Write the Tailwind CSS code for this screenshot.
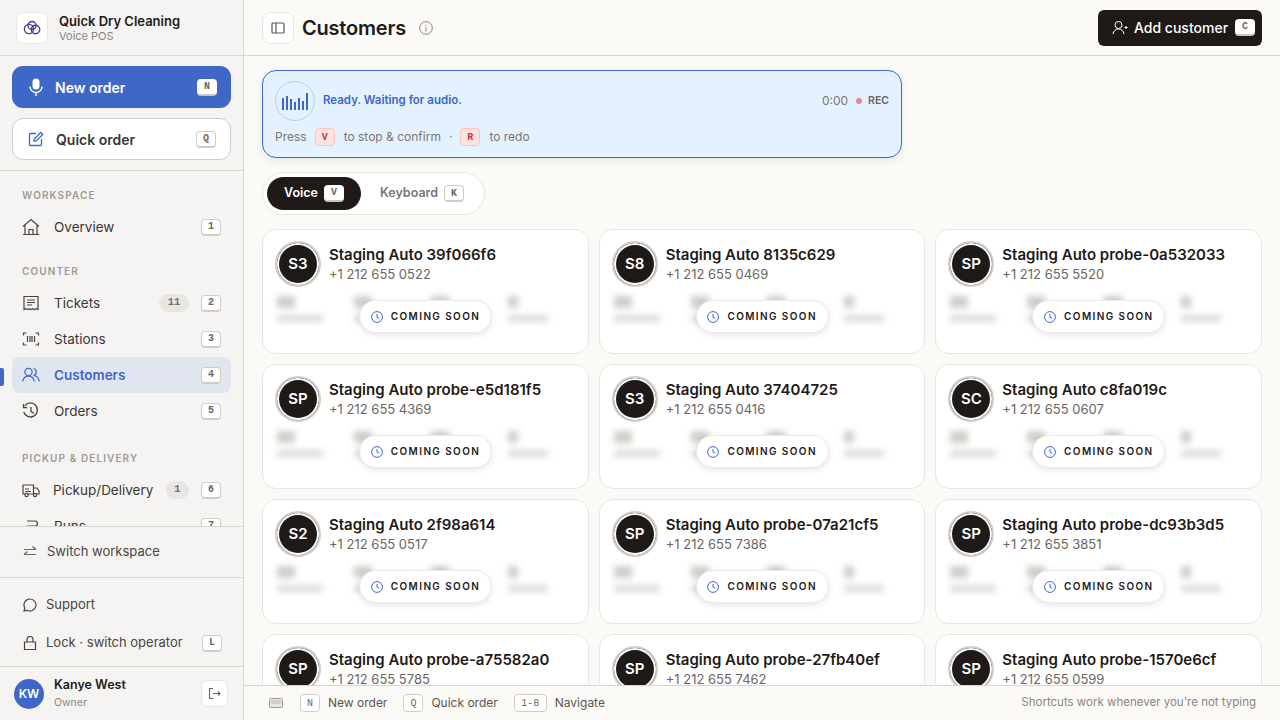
<!DOCTYPE html>
<html lang="en">
<head>
    <meta charset="UTF-8">
    <title>Customers</title>
    <script src="https://cdn.jsdelivr.net/npm/@tailwindcss/browser@4"></script>
</head>
<body class="h-[720px] w-[1280px] overflow-hidden bg-[#fbfaf7] font-['Inter',sans-serif] text-[#1f1a17]">
<div class="flex h-[720px]">
    <!-- sidebar -->
    <aside class="flex h-full w-[244px] shrink-0 flex-col border-r border-[#d9d7d2] bg-[#f5f4f2]">
        <div class="flex h-[56px] shrink-0 items-center gap-[11px] border-b border-[#d9d7d2] pl-[16px]">
            <div class="flex h-[32px] w-[32px] items-center justify-center rounded-[8px] border border-[#e8e6e2] bg-white">
                <svg width="20" height="16" viewBox="0 0 20 16" fill="none" stroke="#4b3a9a" stroke-width="1.4"><circle cx="7" cy="9" r="4.6"/><circle cx="13.5" cy="9.5" r="4.2"/><circle cx="10" cy="5.5" r="4"/></svg>
            </div>
            <div>
                <div class="text-[13px] leading-[16px] font-semibold">Quick Dry Cleaning</div>
                <div class="text-[11px] leading-[14px] text-[#8b8580]">Voice POS</div>
            </div>
        </div>
        <div class="flex h-[115px] shrink-0 flex-col gap-[10px] border-b border-[#d9d7d2] px-[12px] pt-[10px]">
            <div class="flex h-[42px] items-center rounded-[11px] bg-[#3e67c8] pr-[14px] pl-[16px] text-white">
                <svg width="16" height="18" viewBox="0 0 16 18" fill="none" class="mr-[11px]"><rect x="4.5" y="0.5" width="7" height="11" rx="3.5" fill="#fff"/><path d="M2 8.5a6 6 0 0 0 12 0M8 14.5V18" stroke="#fff" stroke-width="1.4"/></svg>
                <span class="flex-1 text-[14px] font-semibold">New order</span>
                <span class="flex h-[17px] w-[20px] items-center justify-center rounded-[4px] border-b-2 border-[#c9c7c3] bg-white font-['Liberation_Mono',monospace] text-[10px] font-bold text-[#6b6560]">N</span>
            </div>
            <div class="flex h-[42px] items-center rounded-[11px] border border-[#cfcdc8] bg-white pr-[14px] pl-[15px] text-[#3d3733]">
                <svg width="16" height="16" viewBox="0 0 16 16" fill="none" stroke="#3e67c8" stroke-width="1.3" class="mr-[12px]"><path d="M8 2.5H2.5a1 1 0 0 0-1 1v10a1 1 0 0 0 1 1h10a1 1 0 0 0 1-1V8"/><path d="M6 10.2l.5-2.5L12.7 1.5l2 2L8.5 9.7z"/></svg>
                <span class="flex-1 text-[14px] font-semibold">Quick order</span>
                <span class="kbd flex h-[17px] w-[20px] items-center justify-center rounded-[4px] border border-b-2 border-[#cfcdc8] bg-white font-['Liberation_Mono',monospace] text-[10px] font-bold text-[#6b6560]">Q</span>
            </div>
        </div>
        <nav class="h-[356px] shrink-0 overflow-hidden border-b border-[#d9d7d2] px-[12px]">
            <div class="pt-[18px] pl-[10px] text-[10px] leading-[12px] font-semibold tracking-[1.1px] text-[#a09a94]">WORKSPACE</div>
            <div class="mt-[8px] flex h-[36px] items-center pr-[10px] pl-[10px] text-[#3d3733]">
                <svg class="mr-[14px] h-[18px] w-[18px]" viewBox="0 0 18 18" fill="none" stroke="#4a4440" stroke-width="1.2"><path d="M1 8.5L9 1.5l8 7M3 7v9.5h12V7M1 16.5h16M7 16.5v-5h4v5"/></svg>
                <span class="flex-1 text-[13.5px]">Overview</span>
                <span class="flex h-[17px] w-[20px] items-center justify-center rounded-[4px] border border-b-2 border-[#cfcdc8] bg-white font-['Liberation_Mono',monospace] text-[10px] font-bold text-[#6b6560]">1</span>
            </div>
            <div class="mt-[20px] pl-[10px] text-[10px] leading-[12px] font-semibold tracking-[1.1px] text-[#a09a94]">COUNTER</div>
            <div class="mt-[8px] flex h-[36px] items-center pr-[10px] pl-[10px] text-[#3d3733]">
                <svg class="mr-[14px] h-[18px] w-[18px]" viewBox="0 0 18 18" fill="none" stroke="#4a4440" stroke-width="1.2"><path d="M2 15.5V2.5h14v13l-1.7-.8-1.8.8-1.7-.8-1.8.8-1.8-.8-1.7.8-1.7-.8zM5 6h8M5 8.5h8M5 11h5"/></svg>
                <span class="flex-1 text-[13.5px]">Tickets</span>
                <span class="mr-[12px] flex h-[18px] w-[30px] items-center justify-center rounded-full bg-[#e8e6e3] font-['Liberation_Mono',monospace] text-[10.5px] font-bold text-[#78726d]">11</span>
                <span class="flex h-[17px] w-[20px] items-center justify-center rounded-[4px] border border-b-2 border-[#cfcdc8] bg-white font-['Liberation_Mono',monospace] text-[10px] font-bold text-[#6b6560]">2</span>
            </div>
            <div class="flex h-[36px] items-center pr-[10px] pl-[10px] text-[#3d3733]">
                <svg class="mr-[14px] h-[18px] w-[18px]" viewBox="0 0 18 18" fill="none" stroke="#4a4440" stroke-width="1.2"><path d="M1.5 5.5V3h3M13.5 3h3v2.5M16.5 12.5V15h-3M4.5 15h-3v-2.5M5.5 6v6M8 6v6M10 6v6M12.5 6v6"/></svg>
                <span class="flex-1 text-[13.5px]">Stations</span>
                <span class="flex h-[17px] w-[20px] items-center justify-center rounded-[4px] border border-b-2 border-[#cfcdc8] bg-white font-['Liberation_Mono',monospace] text-[10px] font-bold text-[#6b6560]">3</span>
            </div>
            <div class="flex h-[36px] items-center rounded-[8px] bg-[#e0e5f0] pr-[10px] pl-[10px] text-[#3e67c8]">
                <svg class="mr-[14px] h-[18px] w-[18px]" viewBox="0 0 18 18" fill="none" stroke="#3e67c8" stroke-width="1.2"><circle cx="6.5" cy="6" r="3.6"/><path d="M.7 15.5c.6-3.4 2.8-5.4 5.8-5.4s5.200 2 5.800 5.400M11.500 2.500a3.600 3.600 0 0 1 0 7c2.900.2 5.100 2.200 5.800 6"/></svg>
                <span class="flex-1 text-[13.5px] font-semibold">Customers</span>
                <span class="flex h-[17px] w-[20px] items-center justify-center rounded-[4px] border border-b-2 border-[#cfcdc8] bg-white font-['Liberation_Mono',monospace] text-[10px] font-bold text-[#6b6560]">4</span>
            </div>
            <div class="flex h-[36px] items-center pr-[10px] pl-[10px] text-[#3d3733]">
                <svg class="mr-[14px] h-[18px] w-[18px]" viewBox="0 0 18 18" fill="none" stroke="#4a4440" stroke-width="1.3"><path d="M3 3.500a7 7 0 1 1-1.300 6.500M1.500 2v3.500H5M9 5v4.500l3 1.700"/></svg>
                <span class="flex-1 text-[13.5px]">Orders</span>
                <span class="flex h-[17px] w-[20px] items-center justify-center rounded-[4px] border border-b-2 border-[#cfcdc8] bg-white font-['Liberation_Mono',monospace] text-[10px] font-bold text-[#6b6560]">5</span>
            </div>
            <div class="mt-[23px] pl-[10px] text-[10px] leading-[12px] font-semibold tracking-[1.1px] text-[#a09a94]">PICKUP &amp; DELIVERY</div>
            <div class="mt-[8px] flex h-[36px] items-center pr-[10px] pl-[10px] text-[#3d3733]">
                <svg class="mr-[13px] h-[18px] w-[18px] shrink-0" viewBox="0 0 18 18" fill="none" stroke="#4a4440" stroke-width="1.2"><path d="M1 4h10.500v9H1zM11.500 7h3.500l2 3v3h-5.500M3 8h4M3 10.500h6"/><circle cx="4.500" cy="14" r="1.600" fill="#f5f4f2"/><circle cx="13" cy="14" r="1.600" fill="#f5f4f2"/></svg>
                <span class="flex-1 text-[13.5px]">Pickup/Delivery</span>
                <span class="mr-[12px] flex h-[18px] w-[23px] items-center justify-center rounded-full bg-[#e8e6e3] font-['Liberation_Mono',monospace] text-[10.5px] font-bold text-[#78726d]">1</span>
                <span class="flex h-[17px] w-[20px] items-center justify-center rounded-[4px] border border-b-2 border-[#cfcdc8] bg-white font-['Liberation_Mono',monospace] text-[10px] font-bold text-[#6b6560]">6</span>
            </div>
            <div class="flex h-[36px] items-center pr-[10px] pl-[10px] text-[#3d3733]">
                <svg class="mr-[14px] h-[18px] w-[18px]" viewBox="0 0 18 18" fill="none" stroke="#4a4440" stroke-width="1.2"><path d="M5 4h8a2.500 2.500 0 0 1 0 5H6a2.500 2.500 0 0 0 0 5h8"/></svg>
                <span class="flex-1 text-[13.5px]">Runs</span>
                <span class="flex h-[17px] w-[20px] items-center justify-center rounded-[4px] border border-b-2 border-[#cfcdc8] bg-white font-['Liberation_Mono',monospace] text-[10px] font-bold text-[#6b6560]">7</span>
            </div>
        </nav>
        <div class="flex h-[51px] shrink-0 items-center border-b border-[#d9d7d2] pl-[23px] text-[13px] text-[#4a4440]">
            <svg class="mr-[10px] h-[14px] w-[14px]" viewBox="0 0 14 14" fill="none" stroke="#6b6560" stroke-width="1.2"><path d="M1 4.500h12M9.500 1.500l3.500 3M13 9.500H1M4.500 6.500l-3.500 3"/></svg>
            Switch workspace
        </div>
        <div class="h-[89px] shrink-0 border-b border-[#d9d7d2] px-[23px] pt-[8px] text-[13px] text-[#4a4440]">
            <div class="flex h-[38px] items-center">
                <svg class="mr-[9px] h-[14px] w-[14px]" viewBox="0 0 14 14" fill="none" stroke="#4a4440" stroke-width="1.2"><path d="M7 1a6 6 0 1 1-2.800 11.300L1 13l.8-3A6 6 0 0 1 7 1z"/></svg>
                Support
            </div>
            <div class="flex h-[38px] items-center">
                <svg class="mr-[9px] h-[14px] w-[14px]" viewBox="0 0 14 14" fill="none" stroke="#4a4440" stroke-width="1.2"><path d="M1.500 6h11v7.500h-11zM4 6V3.500a3 3 0 0 1 6 0V6M7 9.500v.5"/></svg>
                <span class="flex-1">Lock · switch operator</span>
                <span class="-mr-[2px] flex h-[17px] w-[20px] items-center justify-center rounded-[4px] border border-b-2 border-[#cfcdc8] bg-white font-['Liberation_Mono',monospace] text-[10px] font-bold text-[#6b6560]">L</span>
            </div>
        </div>
        <div class="flex flex-1 items-center pr-[15px] pl-[14px]">
            <div class="mr-[10px] flex h-[30px] w-[30px] items-center justify-center rounded-full bg-[#3e67c8] text-[12px] font-semibold text-white">KW</div>
            <div class="flex-1">
                <div class="text-[12.5px] leading-[16px] font-semibold">Kanye West</div>
                <div class="mt-[3px] text-[10.500px] leading-[14px] text-[#8b8580]">Owner</div>
            </div>
            <div class="flex h-[27px] w-[27px] items-center justify-center rounded-[7px] border border-[#e8e6e2] bg-white">
                <svg class="h-[13px] w-[13px]" viewBox="0 0 13 13" fill="none" stroke="#6b6560" stroke-width="1.100"><path d="M5 1.500H1.500v10H5M5 6.500h7M10 4.500l2 2-2 2"/></svg>
            </div>
        </div>
    </aside>

    <!-- indicator on the sidebar rail -->
    <div class="absolute top-[368px] left-0 h-[18px] w-[4px] rounded-r-[2px] bg-[#3e67c8]"></div>

    <main class="flex h-full min-w-0 flex-1 flex-col">
        <header class="flex h-[56px] shrink-0 items-center border-b border-[#d9d7d2] pr-[18px] pl-[18px]">
            <div class="mr-[8px] flex h-[32px] w-[32px] items-center justify-center rounded-[8px] border border-[#e8e6e2] bg-white">
                <svg class="h-[14px] w-[14px]" viewBox="0 0 14 14" fill="none" stroke="#5b5550" stroke-width="1.200"><rect x="1" y="2" width="12" height="10" rx="1"/><path d="M5 2v10"/></svg>
            </div>
            <h1 class="text-[20px] font-semibold tracking-[-0.2px]">Customers</h1>
            <svg class="ml-[13px] h-[14px] w-[14px]" viewBox="0 0 14 14" fill="none" stroke="#8b8580" stroke-width="1"><circle cx="7" cy="7" r="6.300"/><path d="M7 6.200v4M7 3.800v1"/></svg>
            <div class="ml-auto flex h-[36px] w-[164px] items-center rounded-[6px] bg-[#1f1a17] pl-[14px] text-white">
                <svg class="mr-[6px] h-[16px] w-[16px]" viewBox="0 0 16 16" fill="none" stroke="#fff" stroke-width="1"><circle cx="6.500" cy="5" r="3.500"/><path d="M1 14c.5-3 2.500-5 5.500-5s5 2 5.500 5M12.500 7.500h3M14 6v3"/></svg>
                <span class="text-[14px] font-medium">Add customer</span>
                <span class="ml-[7px] flex h-[17px] w-[20px] items-center justify-center rounded-[4px] border-b-2 border-[#c9c7c3] bg-white font-['Liberation_Mono',monospace] text-[10px] font-bold text-[#6b6560]">C</span>
            </div>
        </header>

        <div class="min-h-0 flex-1 overflow-hidden px-[18px] pt-[14px]">
            <!-- recording card -->
            <div class="h-[88px] w-[640px] rounded-[14px] border border-[#3e67c8] bg-[#e3f2fe] px-[12px] pt-[10px] shadow-[0_3px_8px_rgba(0,0,0,0.08)]">
                <div class="flex items-center">
                    <div class="mr-[8px] flex h-[40px] w-[40px] items-center justify-center rounded-full border border-[#b3cdf5]">
                        <svg width="27" height="17" viewBox="0 0 27 17" fill="#3e67c8"><rect x="0" y="5" width="2" height="12"/><rect x="4" y="3" width="2" height="14"/><rect x="8" y="6" width="2" height="11"/><rect x="12" y="9" width="2" height="8"/><rect x="16" y="5" width="2" height="12"/><rect x="20" y="8" width="2" height="9"/><rect x="24" y="0" width="2" height="17"/></svg>
                    </div>
                    <span class="text-[11.500px] font-semibold text-[#3e67c8]">Ready. Waiting for audio.</span>
                    <span class="ml-auto text-[12px] text-[#7c7672]">0:00</span>
                    <span class="mr-[6px] ml-[8px] h-[6px] w-[6px] rounded-full bg-[#e08a92]"></span>
                    <span class="text-[10.500px] font-semibold text-[#6b6560]">REC</span>
                </div>
                <div class="mt-[7px] flex items-center text-[12px] text-[#7c7672]">
                    <span>Press</span>
                    <span class="mr-[9px] ml-[8px] flex h-[18px] w-[20px] items-center justify-center rounded-[4px] border border-[#fbc3bd] bg-[#fee2df] font-['Liberation_Mono',monospace] text-[10px] font-bold text-[#c93a3a]">V</span>
                    <span>to stop &amp; confirm</span>
                    <span class="mx-[8px]">·</span>
                    <span class="mr-[9px] flex h-[18px] w-[20px] items-center justify-center rounded-[4px] border border-[#fbc3bd] bg-[#fee2df] font-['Liberation_Mono',monospace] text-[10px] font-bold text-[#c93a3a]">R</span>
                    <span>to redo</span>
                </div>
            </div>

            <!-- voice / keyboard toggle -->
            <div class="mt-[14px] flex h-[43px] w-[223px] items-center rounded-full border border-[#e8e6e2] bg-white pl-[4px]">
                <div class="flex h-[33px] w-[94px] items-center justify-center rounded-full bg-[#1f1a17] text-[12.500px] font-semibold text-white">
                    Voice
                    <span class="ml-[6px] flex h-[17px] w-[20px] items-center justify-center rounded-[4px] border-b-2 border-[#c9c7c3] bg-white font-['Liberation_Mono',monospace] text-[10px] font-bold text-[#6b6560]">V</span>
                </div>
                <div class="ml-[19px] flex items-center text-[12.500px] font-semibold text-[#7c7672]">
                    Keyboard
                    <span class="ml-[6px] flex h-[17px] w-[20px] items-center justify-center rounded-[4px] border border-b-2 border-[#cfcdc8] bg-white font-['Liberation_Mono',monospace] text-[10px] font-bold text-[#6b6560]">K</span>
                </div>
            </div>

            <div id="grid" class="mt-[14px] grid grid-cols-3 gap-[10px]"></div>
        </div>

        <footer class="flex h-[35px] shrink-0 items-center border-t border-[#d9d7d2] bg-[#fbfaf7] pr-[24px] pl-[25px] text-[12px] text-[#5b5550]">
            <svg class="mr-[17px] h-[10px] w-[14px]" viewBox="0 0 14 10"><rect x="0.500" y="0.500" width="13" height="9" rx="1" fill="#e8e6e3" stroke="#a09a94"/><rect x="2" y="2" width="10" height="4" fill="#cfcdc8"/></svg>
            <span class="mr-[8px] flex h-[18px] w-[20px] items-center justify-center rounded-[4px] border border-[#cfcdc8] bg-white font-['Liberation_Mono',monospace] text-[10px] text-[#6b6560]">N</span>
            New order
            <span class="mr-[8px] ml-[16px] flex h-[18px] w-[20px] items-center justify-center rounded-[4px] border border-[#cfcdc8] bg-white font-['Liberation_Mono',monospace] text-[10px] text-[#6b6560]">Q</span>
            Quick order
            <span class="mr-[8px] ml-[16px] flex h-[18px] w-[33px] items-center justify-center rounded-[4px] border border-[#cfcdc8] bg-white font-['Liberation_Mono',monospace] text-[10px] text-[#6b6560]">1-8</span>
            Navigate
            <span class="ml-auto text-[11.500px] text-[#8b8580]">Shortcuts work whenever you're not typing</span>
        </footer>
    </main>
</div>

<script>
    const customers = [
        ['S3', 'Staging Auto 39f066f6', '+1 212 655 0522'],
        ['S8', 'Staging Auto 8135c629', '+1 212 655 0469'],
        ['SP', 'Staging Auto probe-0a532033', '+1 212 655 5520'],
        ['SP', 'Staging Auto probe-e5d181f5', '+1 212 655 4369'],
        ['S3', 'Staging Auto 37404725', '+1 212 655 0416'],
        ['SC', 'Staging Auto c8fa019c', '+1 212 655 0607'],
        ['S2', 'Staging Auto 2f98a614', '+1 212 655 0517'],
        ['SP', 'Staging Auto probe-07a21cf5', '+1 212 655 7386'],
        ['SP', 'Staging Auto probe-dc93b3d5', '+1 212 655 3851'],
        ['SP', 'Staging Auto probe-a75582a0', '+1 212 655 5785'],
        ['SP', 'Staging Auto probe-27fb40ef', '+1 212 655 7462'],
        ['SP', 'Staging Auto probe-1570e6cf', '+1 212 655 0599'],
    ];

    const grid = document.getElementById('grid');
    customers.forEach(([initials, name, phone]) => {
        const card = document.createElement('div');
        card.className = 'relative h-[125px] rounded-[14px] border border-[#e8e6e2] bg-white pt-[11px] pl-[12px]';
        card.innerHTML = `
            <div class="flex items-center">
                <div class="flex h-[46px] w-[46px] shrink-0 items-center justify-center rounded-full border-[2px] border-[#cfcdc8] bg-[#1f1a17] text-[15px] font-semibold text-white shadow-[inset_0_0_0_2px_#fff]">${initials}</div>
                <div class="ml-[8px]">
                    <div class="text-[15px] leading-[20px] font-semibold">${name}</div>
                    <div class="text-[13px] leading-[19px] text-[#6b6560]">${phone}</div>
                </div>
            </div>
            <div class="absolute top-[66px] right-[16px] left-[14px] flex justify-between pr-[24px] blur-[3px]">
                <div><div class="h-[12px] w-[18px] bg-[#cfcdc8]"></div><div class="mt-[7px] h-[7px] w-[46px] bg-[#dddbd7]"></div></div>
                <div><div class="h-[12px] w-[18px] bg-[#cfcdc8]"></div><div class="mt-[7px] h-[7px] w-[46px] bg-[#dddbd7]"></div></div>
                <div><div class="h-[12px] w-[18px] bg-[#cfcdc8]"></div><div class="mt-[7px] h-[7px] w-[46px] bg-[#dddbd7]"></div></div>
                <div><div class="h-[12px] w-[10px] bg-[#cfcdc8]"></div><div class="mt-[7px] h-[7px] w-[40px] bg-[#dddbd7]"></div></div>
            </div>
            <div class="absolute top-[70px] left-[96px] flex h-[33px] w-[133px] items-center justify-center rounded-full border border-[#eceae6] bg-white text-[10px] font-semibold tracking-[1.4px] shadow-[0_2px_6px_rgba(0,0,0,0.1)]">
                <svg class="mr-[8px] h-[12px] w-[12px]" viewBox="0 0 12 12" fill="none" stroke="#3e67c8" stroke-width="1"><circle cx="6" cy="6" r="5.400"/><path d="M6 3v3.200l2.200 1"/></svg>
                COMING SOON
            </div>`;
        grid.appendChild(card);
    });
</script>
</body>
</html>
